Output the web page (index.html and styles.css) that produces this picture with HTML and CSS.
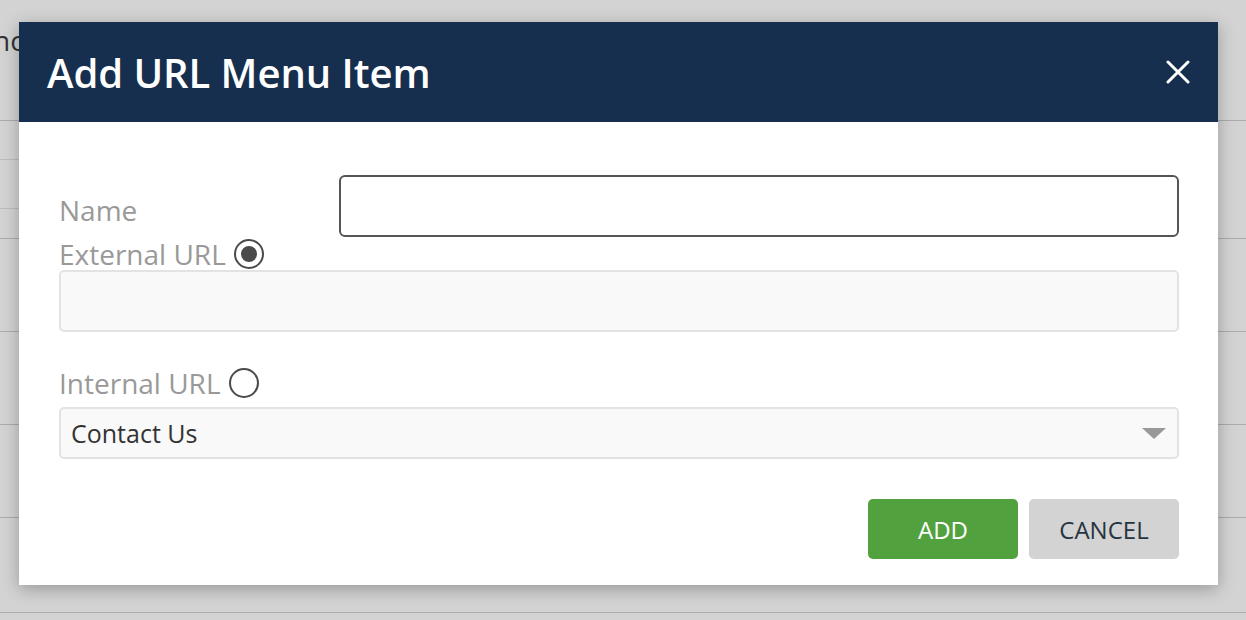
FILE: index.html
```html
<!DOCTYPE html>
<html lang="en">
<head>
    <meta charset="UTF-8">
    <meta name="viewport" content="width=device-width, initial-scale=1.0">
    <title>Add URL Menu Item</title>
    <link rel="stylesheet" href="styles.css">
</head>
<body>
    <div class="page">
        <h2 class="page-title">nc</h2>
        <div class="rows">
            <div class="row row-head">
                <div class="sub-row"></div>
                <div class="sub-row"></div>
            </div>
            <div class="row"></div>
            <div class="row"></div>
            <div class="row"></div>
            <div class="row row-last"></div>
            <div class="row"></div>
        </div>
    </div>

    <div class="modal">
        <div class="modal-header">
            <h1>Add URL Menu Item</h1>
            <button class="close-btn" type="button" aria-label="Close">
                <svg width="24" height="24" viewBox="0 0 24 24">
                    <path d="M2 2 L22 22 M22 2 L2 22" stroke="#fff" stroke-width="3" stroke-linecap="round" fill="none"/>
                </svg>
            </button>
        </div>
        <form class="modal-body" id="menuItemForm">
            <div class="name-row">
                <label for="name" class="field-label name-label">Name</label>
                <input type="text" id="name" class="name-input">
            </div>

            <label class="field-label radio-label external-label">
                External URL
                <input type="radio" name="urlType" value="external" checked>
                <span class="radio"></span>
            </label>
            <input type="text" class="text-input" disabled>

            <label class="field-label radio-label internal-label">
                Internal URL
                <input type="radio" name="urlType" value="internal">
                <span class="radio"></span>
            </label>
            <div class="select">
                <span>Contact Us</span>
                <span class="caret"></span>
            </div>

            <div class="actions">
                <button type="submit" class="btn btn-add">ADD</button>
                <button type="button" class="btn btn-cancel">CANCEL</button>
            </div>
        </form>
    </div>
</body>
</html>
```

FILE: styles.css
```css
body {
    font-family: "Open Sans", "DejaVu Sans", sans-serif;
    margin: 0;
    background-color: #d3d3d3;
}
.page {
    position: relative;
    height: 620px;
    overflow: hidden;
}
.page-title {
    margin: 0 0 0 -7px;
    padding-top: 21px;
    height: 48px;
    font-size: 28px;
    font-weight: 400;
    color: #333;
    line-height: 38px;
}
.rows {
    padding-top: 51px;
}
.row {
    height: 92px;
    border-top: 1px solid #ababab;
}
.row-head {
    height: 117px;
}
.row-last {
    height: 94px;
}
.sub-row {
    width: 60px;
    height: 38px;
    border-bottom: 1px solid #bcbcbc;
}
.sub-row + .sub-row {
    height: 48px;
}

/* modal */
.modal {
    position: absolute;
    left: 19px;
    top: 22px;
    width: 1199px;
    height: 563px;
    background: #fff;
    box-shadow: 0 4px 16px rgba(0,0,0,0.28);
}
.modal-header {
    height: 100px;
    background: #172f4e;
    display: flex;
    align-items: center;
    justify-content: space-between;
    padding: 0 28px;
}
.modal-header h1 {
    margin: 0;
    color: #fff;
    font-size: 40px;
    font-weight: 600;
    letter-spacing: -0.05px;
}
.close-btn {
    background: none;
    border: none;
    padding: 0;
    width: 24px;
    height: 24px;
    cursor: pointer;
}
.modal-body {
    padding: 53px 39px 0 40px;
}
.name-row {
    display: flex;
    align-items: flex-end;
}
.field-label {
    display: block;
    font-size: 28px;
    line-height: 32px;
    color: #999;
}
.name-label {
    width: 280px;
    margin-bottom: 11px;
}
.name-input {
    flex: 1;
    height: 62px;
    box-sizing: border-box;
    border: 2px solid #555;
    border-radius: 6px;
    font: inherit;
    padding: 0 12px;
}
.radio-label {
    display: flex;
    align-items: center;
    gap: 8px;
}
.external-label {
    margin-top: 1px;
}
.radio-label input {
    display: none;
}
.radio {
    width: 30px;
    height: 30px;
    box-sizing: border-box;
    border: 2px solid #4a4a4a;
    border-radius: 50%;
    display: flex;
    align-items: center;
    justify-content: center;
}
.radio-label input:checked + .radio::after {
    content: "";
    width: 16px;
    height: 16px;
    border-radius: 50%;
    background: #4a4a4a;
}
.text-input {
    display: block;
    width: 100%;
    height: 62px;
    box-sizing: border-box;
    border: 2px solid #e3e3e3;
    border-radius: 5px;
    background: #f9f9f9;
}
.internal-label {
    margin-top: 35px;
    margin-bottom: 8px;
}
.select {
    height: 52px;
    box-sizing: border-box;
    border: 2px solid #e3e3e3;
    border-radius: 5px;
    background: #f9f9f9;
    display: flex;
    align-items: center;
    justify-content: space-between;
    padding: 0 11px 0 10px;
    font-size: 25px;
    color: #333;
}
.caret {
    width: 0;
    height: 0;
    border-left: 12px solid transparent;
    border-right: 12px solid transparent;
    border-top: 11px solid #999;
}
.actions {
    display: flex;
    justify-content: flex-end;
    gap: 11px;
    margin-top: 40px;
}
.btn {
    width: 150px;
    height: 60px;
    border: none;
    border-radius: 5px;
    font-family: inherit;
    font-size: 24px;
    cursor: pointer;
}
.btn-add {
    background: #52a13f;
    color: #fff;
}
.btn-cancel {
    background: #d3d3d3;
    color: #26343f;
}
```
